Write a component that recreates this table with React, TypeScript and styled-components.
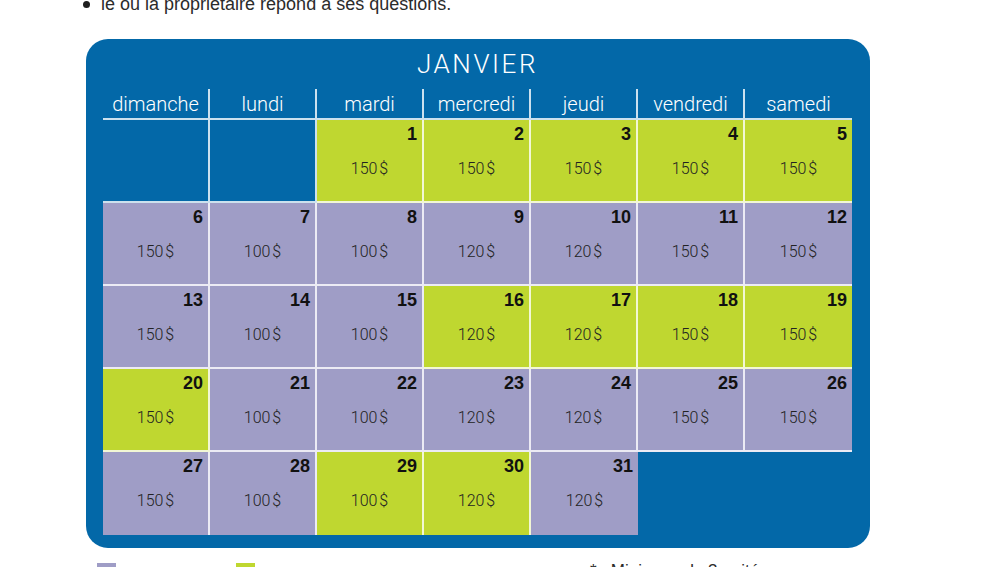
import React from "react";
import styled, { createGlobalStyle } from "styled-components";

const GlobalStyle = createGlobalStyle`
  html, body {
    margin: 0;
    padding: 0;
    background: #ffffff;
  }
  body {
    font-family: "Liberation Sans", Arial, sans-serif;
    color: #222;
  }
`;

const BLUE = "#0368a8";
const GREEN = "#bfd730";
const PURPLE = "#9f9dc6";
const LINE = "rgba(255, 255, 255, 0.8)";

const Page = styled.div`
  width: 1002px;
  height: 567px;
  overflow: hidden;
  padding-left: 82px;
  box-sizing: border-box;
`;

const Intro = styled.div`
  display: flex;
  align-items: center;
  margin-top: -6px;
  height: 20px;
  font-size: 18px;
  line-height: 20px;
  color: #2b2b2b;
`;

const Bullet = styled.span`
  width: 7px;
  height: 7px;
  border-radius: 50%;
  background: #1e1e1e;
  margin: 0 11px 0 1px;
  flex: none;
`;

const Panel = styled.section`
  width: 784px;
  height: 509px;
  margin: 25px 0 0 4px;
  padding: 0 18px 0 17px;
  box-sizing: border-box;
  background: ${BLUE};
  border-radius: 22px;
`;

const Title = styled.h2`
  margin: 0;
  height: 50px;
  line-height: 50px;
  text-align: center;
  font-family: Roboto, "Liberation Sans", sans-serif;
  font-weight: 300;
  font-size: 26px;
  letter-spacing: 2.6px;
  color: #ffffff;
`;

const Grid = styled.div`
  display: grid;
  grid-template-columns: repeat(7, 107px);
`;

const DayName = styled.div<{ last: boolean }>`
  height: 31px;
  line-height: 30px;
  text-align: center;
  font-family: Roboto, "Liberation Sans", sans-serif;
  font-weight: 300;
  font-size: 20px;
  color: #ffffff;
  border-bottom: 2px solid ${LINE};
  border-right: ${({ last }) => (last ? "none" : `2px solid ${LINE}`)};
  box-sizing: border-box;
`;

const Cell = styled.div<{ tone: "green" | "purple" | "none"; right: boolean; bottom: boolean }>`
  height: 83px;
  box-sizing: border-box;
  background: ${({ tone }) =>
    tone === "green" ? GREEN : tone === "purple" ? PURPLE : "transparent"};
  border-right: ${({ right }) => (right ? `2px solid ${LINE}` : "none")};
  border-bottom: ${({ bottom }) => (bottom ? `2px solid ${LINE}` : "none")};
  padding: 5px 5px 0 0;
  display: flex;
  flex-direction: column;
`;

const DayNumber = styled.div`
  text-align: right;
  font-size: 18px;
  line-height: 18px;
  font-weight: 700;
  color: #111;
`;

const Price = styled.div`
  margin-top: 18px;
  padding-left: 5px;
  text-align: center;
  font-family: Roboto, "Liberation Sans", sans-serif;
  font-weight: 300;
  font-size: 16px;
  line-height: 16px;
  color: #222;
`;

const LegendRow = styled.div`
  display: flex;
  margin-top: 15px;
  padding-left: 15px;
`;

const LegendItem = styled.div<{ width: number }>`
  width: ${({ width }) => width}px;
  display: flex;
  align-items: flex-start;
`;

const Swatch = styled.span<{ color: string }>`
  width: 19px;
  height: 14px;
  background: ${({ color }) => color};
`;

const Note = styled.div`
  font-size: 17px;
  line-height: 20px;
  margin-top: -2px;
  color: #2b2b2b;
  white-space: pre;
`;

const weekDays = ["dimanche", "lundi", "mardi", "mercredi", "jeudi", "vendredi", "samedi"];
const weekPrices = [150, 100, 100, 120, 120, 150, 150];
const greenDays = [1, 2, 3, 4, 5, 16, 17, 18, 19, 20, 29, 30];

type Slot = { day: number | null; price: number };

const slots: Slot[] = Array.from({ length: 35 }, (_, i) => {
  const day = i - 1;
  if (day < 1 || day > 31) return { day: null, price: 0 };
  const price = day <= 5 ? 150 : weekPrices[i % 7];
  return { day, price };
});

const App = () => {
  return (
    <>
      <GlobalStyle />
      <Page>
        <Intro>
          <Bullet />
          le ou la propriétaire répond à ses questions.
        </Intro>
        <Panel>
          <Title>JANVIER</Title>
          <Grid>
            {weekDays.map((name, i) => (
              <DayName key={name} last={i === 6}>
                {name}
              </DayName>
            ))}
            {slots.map((slot, i) => {
              const col = i % 7;
              const row = Math.floor(i / 7);
              const lastRow = row === 4;
              if (slot.day === null) {
                return (
                  <Cell key={i} tone="none" right={!lastRow && col < 6} bottom={!lastRow} />
                );
              }
              return (
                <Cell
                  key={i}
                  tone={greenDays.includes(slot.day) ? "green" : "purple"}
                  right={col < 6 && slot.day !== 31}
                  bottom={!lastRow}
                >
                  <DayNumber>{slot.day}</DayNumber>
                  <Price>{slot.price}&#8239;$</Price>
                </Cell>
              );
            })}
          </Grid>
        </Panel>
        <LegendRow>
          <LegendItem width={139}>
            <Swatch color={PURPLE} />
          </LegendItem>
          <LegendItem width={354}>
            <Swatch color={GREEN} />
          </LegendItem>
          <Note>{"*   Minimum de 3 nuités"}</Note>
        </LegendRow>
      </Page>
    </>
  );
};

export default App;
